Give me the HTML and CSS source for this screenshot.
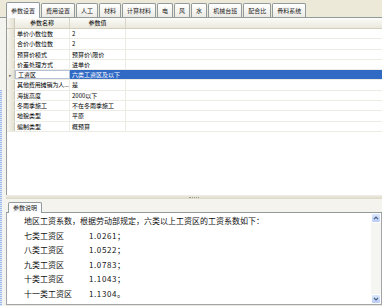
FILE: index.html
```html
<!DOCTYPE html>
<html lang="zh-CN">
<head>
  <meta charset="UTF-8">
  <title>参数设置</title>
  <link rel="stylesheet" href="styles.css">
</head>
<body>
<div class="app">
  <div class="tabs">
    <span class="tab active">参数设置</span>
    <span class="tab">费用设置</span>
    <span class="tab">人工</span>
    <span class="tab">材料</span>
    <span class="tab">计算材料</span>
    <span class="tab">电</span>
    <span class="tab">风</span>
    <span class="tab">水</span>
    <span class="tab">机械台班</span>
    <span class="tab">配合比</span>
    <span class="tab">骨料系统</span>
  </div>

  <div class="body">
    <div class="gutter">
      <div class="gutter-top"></div>
      <div class="gutter-dots"></div>
    </div>

    <div class="main">
      <div class="grid-panel">
        <div class="row head">
          <span class="rh"></span>
          <span class="c1">参数名称</span>
          <span class="c2">参数值</span>
          <span class="c3"></span>
        </div>
        <div class="row"><span class="rh"></span><span class="c1">单价小数位数</span><span class="c2">2</span><span class="c3"></span></div>
        <div class="row"><span class="rh"></span><span class="c1">合价小数位数</span><span class="c2">2</span><span class="c3"></span></div>
        <div class="row"><span class="rh"></span><span class="c1">预算价模式</span><span class="c2">预算价\限价</span><span class="c3"></span></div>
        <div class="row"><span class="rh"></span><span class="c1">价差处理方式</span><span class="c2">进单价</span><span class="c3"></span></div>
        <div class="row selected"><span class="rh">▸</span><span class="c1">工资区</span><span class="c2">六类工资区及以下</span><span class="c3"></span></div>
        <div class="row"><span class="rh"></span><span class="c1 tight">其他费用摊销为人...</span><span class="c2">是</span><span class="c3"></span></div>
        <div class="row"><span class="rh"></span><span class="c1">海拔高度</span><span class="c2">2000以下</span><span class="c3"></span></div>
        <div class="row"><span class="rh"></span><span class="c1">冬雨季施工</span><span class="c2">不在冬雨季施工</span><span class="c3"></span></div>
        <div class="row"><span class="rh"></span><span class="c1">地貌类型</span><span class="c2">平原</span><span class="c3"></span></div>
        <div class="row"><span class="rh"></span><span class="c1">编制类型</span><span class="c2">概预算</span><span class="c3"></span></div>
      </div>

      <div class="splitter"><span class="grip"></span></div>

      <div class="desc-tabs">
        <span class="tab active">参数说明</span>
      </div>

      <div class="textbox">
        <div class="text">
          <p>地区工资系数，根据劳动部规定，六类以上工资区的工资系数如下：</p>
          <div class="line"><span class="k">七类工资区</span><span class="v">1.0261；</span></div>
          <div class="line"><span class="k">八类工资区</span><span class="v">1.0522；</span></div>
          <div class="line"><span class="k">九类工资区</span><span class="v">1.0783；</span></div>
          <div class="line"><span class="k">十类工资区</span><span class="v">1.1043；</span></div>
          <div class="line"><span class="k">十一类工资区</span><span class="v">1.1304。</span></div>
        </div>
        <div class="scroll">
          <span class="btn">
            <svg width="8" height="8" viewBox="0 0 8 8"><path d="M2 5 L4 3 L6 5" fill="none" stroke="#4d6185" stroke-width="1.2"/></svg>
          </span>
          <span class="track"></span>
          <span class="btn">
            <svg width="8" height="8" viewBox="0 0 8 8"><path d="M2 3 L4 5 L6 3" fill="none" stroke="#4d6185" stroke-width="1.2"/></svg>
          </span>
        </div>
      </div>
    </div>
  </div>
</div>
</body>
</html>
```

FILE: styles.css
```css
body {
  margin: 0;
  font-family: "Noto Sans CJK SC", "Noto Sans", sans-serif;
  color: #000;
}
.app {
  width: 382px;
  height: 306px;
  background: #ece9d8;
  display: flex;
  flex-direction: column;
  overflow: hidden;
}

/* top tab strip */
.tabs {
  height: 18px;
  flex: none;
  display: flex;
  align-items: flex-end;
  gap: 1px;
  padding-left: 6px;
  border-bottom: 1px solid #919b9c;
  box-sizing: border-box;
}
.tab {
  height: 14px;
  padding: 0 4px;
  font-size: 6px;
  line-height: 13px;
  white-space: nowrap;
  color: #222;
  border: 1px solid #919b9c;
  border-bottom: none;
  border-radius: 2px 2px 0 0;
  background: linear-gradient(#ffffff, #ecebe5);
  box-sizing: border-box;
}
.tab.active {
  height: 16px;
  margin-bottom: -1px;
  background: #fcfcfe;
  line-height: 15px;
}

.body {
  flex: 1;
  display: flex;
}
.gutter {
  width: 6px;
  display: flex;
  flex-direction: column;
  background: #f3f3f0;
}
.gutter-top {
  height: 72px;
}
.gutter-dots {
  flex: 1;
  width: 2px;
  background: repeating-linear-gradient(#9fbbe9 0 1px, #dce6f7 1px 2px);
}
.main {
  flex: 1;
  display: flex;
  flex-direction: column;
}

/* parameter grid */
.grid-panel {
  height: 177px;
  background: #fff;
  border-left: 1px solid #9a9a96;
}
.row {
  display: flex;
  height: 10.3px;
  font-size: 6px;
  line-height: 9px;
  border-bottom: 1px solid #edece4;
  box-sizing: border-box;
  white-space: nowrap;
}
.row span {
  box-sizing: border-box;
}
.rh {
  width: 8px;
  flex: none;
  background: linear-gradient(90deg, #f7f6f1, #e4e1d2);
  border-right: 1px solid #cfccbd;
  color: #777;
  font-size: 5px;
  text-align: center;
}
.c1 {
  width: 55px;
  flex: none;
  padding-left: 2px;
  border-right: 1px solid #edece4;
}
.c1.tight {
  letter-spacing: -0.1px;
}
.c2 {
  width: 56px;
  flex: none;
  padding-left: 2px;
  border-right: 1px solid #edece4;
}
.c3 {
  flex: 1;
}
.row.head {
  height: 11px;
  line-height: 10px;
  background: linear-gradient(#fbfbf8, #ebe9dd);
  border-bottom: 1px solid #d3cfbf;
}
.row.head .c1,
.row.head .c2 {
  text-align: center;
  padding-left: 0;
  border-right: 1px solid #d9d6c7;
}
.row.selected .c1 {
  border: 1px solid #b5c2d6;
  line-height: 7px;
}
.row.selected .c2,
.row.selected .c3 {
  background: #316ac5;
  color: #fff;
  border-right: none;
}

/* splitter */
.splitter {
  height: 4px;
  display: flex;
  justify-content: center;
  align-items: center;
  background: linear-gradient(#efeee6, #dcd8c6);
}
.grip {
  width: 10px;
  border-top: 1px dotted #9c9a8c;
}

/* description panel */
.desc-tabs {
  height: 14px;
  display: flex;
  align-items: flex-end;
  padding-left: 2px;
  background: #f4f3ee;
  border-bottom: 1px solid #919b9c;
  box-sizing: border-box;
}
.desc-tabs .tab.active {
  height: 11px;
  line-height: 10px;
}
.textbox {
  height: 92px;
  display: flex;
  background: #fff;
  border: 1px solid #a2a6aa;
  border-top: none;
  box-sizing: border-box;
}
.text {
  flex: 1;
  padding: 1px 0 0 17px;
  font-size: 8px;
  line-height: 14.6px;
  white-space: nowrap;
  color: #111;
}
.text p {
  margin: 0;
}
.line {
  display: flex;
}
.k {
  width: 65px;
}
.v {
  letter-spacing: 0.6px;
}
.scroll {
  width: 10px;
  display: flex;
  flex-direction: column;
  background: #f5f5f1;
}
.track {
  flex: 1;
}
.btn {
  height: 10px;
  display: flex;
  align-items: center;
  justify-content: center;
  border: 1px solid #fff;
  border-radius: 2px;
  background: linear-gradient(#dce7fc, #b8ccf5);
  box-sizing: border-box;
}
```
